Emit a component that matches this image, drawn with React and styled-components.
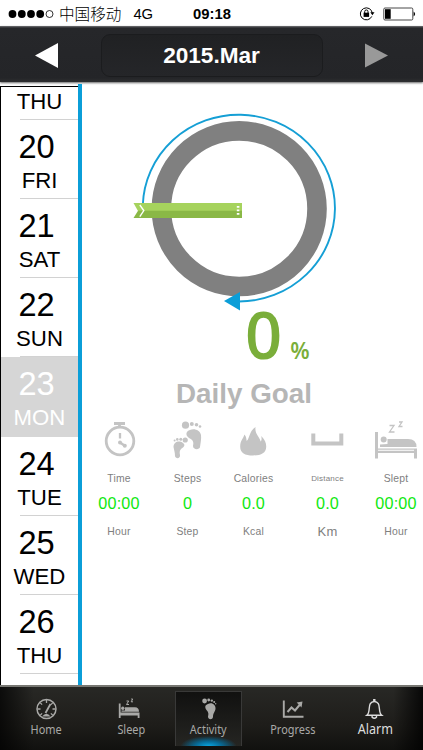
// import packages
import React from "react";
import { useState } from "react";
import styled, { createGlobalStyle } from "styled-components";

const GlobalStyle = createGlobalStyle`
  * {
    box-sizing: border-box;
  }
  body {
    margin: 0;
    background: white;
    font-family: "Liberation Sans", "Noto Sans CJK SC", sans-serif;
  }
`;

const Screen = styled.div`
  width: 423px;
  height: 750px;
  display: flex;
  flex-direction: column;
  overflow: hidden;
  background: white;
`;

const StatusBar = styled.div`
  flex: none;
  height: 26px;
  padding: 1px 7px 0 8px;
  display: grid;
  grid-template-columns: 1fr auto 1fr;
  align-items: center;
  font-size: 14.8px;
  color: black;
`;
const Carrier = styled.div`
  display: flex;
  align-items: center;
  white-space: nowrap;
`;
const CarrierName = styled.span`
  margin: -1px 12px 0 5px;
  font-family: "Noto Sans CJK SC", sans-serif;
  font-size: 15.6px;
  font-weight: 300;
  line-height: 24px;
`;
const Clock = styled.div`
  font-weight: 700;
  font-size: 14.8px;
`;
const StatusIcons = styled.div`
  display: flex;
  justify-content: flex-end;
  align-items: center;
  gap: 8px;
`;

const Header = styled.div`
  flex: none;
  height: 56px;
  padding: 6px 34px 4px;
  display: flex;
  justify-content: space-between;
  align-items: center;
  background: linear-gradient(#727376 0, #26272a 2px, #242528 52px, #2e2f31 56px);
  box-shadow: 0 1px 2px rgba(0, 0, 0, 0.6);
`;
const ArrowButton = styled.button`
  width: 24px;
  height: 28px;
  padding: 0;
  border: none;
  background: none;
  color: ${(props) => (props.$dim ? "#999999" : "#ffffff")};
  svg {
    display: block;
  }
`;
const MonthTitle = styled.div`
  width: 222px;
  height: 43px;
  border-radius: 9px;
  border: 1px solid #1b1c1e;
  background: linear-gradient(#202123, #252629);
  color: white;
  font-size: 22.6px;
  font-weight: 700;
  line-height: 42px;
  text-align: center;
`;

const Main = styled.div`
  height: 603px;
  padding-top: 2px;
  display: flex;
`;

const DayColumn = styled.div`
  flex: none;
  width: 82px;
  height: 601px;
  padding-top: 2px;
  border-right: 4px solid #0b9ed8;
`;
const DayList = styled.div`
  height: 599px;
  overflow: hidden;
  border-left: 1.6px solid black;
  border-top: 1px solid black;
`;
const DayCell = styled.div`
  height: ${(props) => (props.$tail ? "32.8px" : "79.2px")};
  padding-top: ${(props) => (props.$tail ? "1px" : "11px")};
  text-align: center;
  color: ${(props) => (props.$selected ? "white" : "black")};
  background: ${(props) =>
    props.$selected
      ? "#d6d6d6"
      : "linear-gradient(#d2d2d2, #d2d2d2) right bottom / 58px 1px no-repeat"};
`;
const DayNumber = styled.div`
  height: 36px;
  padding-right: 6px;
  font-size: 32.6px;
  line-height: 32px;
`;
const DayName = styled.div`
  font-size: 22.2px;
  line-height: 28px;
`;

const Content = styled.div`
  flex: 1;
  padding-top: 26px;
  display: flex;
  flex-direction: column;
`;
const Dial = styled.svg`
  flex: none;
  display: block;
  margin-left: 48px;
`;
const Percent = styled.div`
  display: flex;
  align-items: baseline;
  height: 52px;
  padding-left: 163px;
  color: #7aae3a;
  font-family: "Open Sans", "Liberation Sans", sans-serif;
  font-weight: 600;
  font-size: 65px;
  line-height: 47px;
`;
const PercentSign = styled.span`
  margin-left: 8px;
  font-size: 22.5px;
`;
const Goal = styled.div`
  margin: 13px 0 0 94px;
  font-size: 27.8px;
  font-weight: 700;
  line-height: 36px;
  color: #b6b6b6;
`;

const Stats = styled.div`
  margin-top: 9px;
  padding-left: 2px;
  display: grid;
  grid-template-columns: 70px 67px 65px 83px 54px;
`;
const Stat = styled.div`
  display: flex;
  flex-direction: column;
  align-items: center;
  white-space: nowrap;
  color: #808080;
`;
const StatIcon = styled.svg`
  display: block;
  color: #c4c4c4;
`;
const StatLabel = styled.div`
  margin-top: 8px;
  height: 20px;
  line-height: 20px;
  font-size: ${(props) => (props.$small ? "8px" : "10.4px")};
  letter-spacing: 0.2px;
`;
const StatValue = styled.div`
  margin-top: 3px;
  height: 22px;
  line-height: 22px;
  font-size: 16.2px;
  letter-spacing: 0.2px;
  color: #10e810;
`;
const StatUnit = styled.div`
  margin-top: 8px;
  height: 20px;
  line-height: 20px;
  font-size: ${(props) => (props.$large ? "13px" : "10.4px")};
  letter-spacing: 0.2px;
`;

const TabBar = styled.div`
  flex: none;
  height: 65px;
  padding: 4px 3px 4px 5px;
  display: grid;
  grid-template-columns: 83px 87px 67px 102px 62px;
  border-top: 2px solid #777772;
  background:
    linear-gradient(90deg, rgba(0, 0, 0, 0.7), transparent 8%, transparent 93%, rgba(0, 0, 0, 0.8)),
    linear-gradient(#282825, #1e1d1a 60%, #11110f);
`;
const Tab = styled.button`
  padding: 5px 0 0;
  border: 1px solid ${(props) => (props.$active ? "#393938" : "transparent")};
  border-bottom: none;
  display: flex;
  flex-direction: column;
  align-items: center;
  background: ${(props) =>
    props.$active
      ? "radial-gradient(ellipse 28px 10px at 50% 100%, #08a4df, #076b98 45%, transparent), linear-gradient(#111110, #252522)"
      : "none"};
  color: ${(props) => (props.$bright ? "#dddddd" : "#a9a9a7")};
  font-family: "Noto Sans", sans-serif;
  font-size: ${(props) => (props.$bright ? "13.8px" : "12px")};
  line-height: 18px;
`;
const TabIcon = styled.svg`
  display: block;
  flex: none;
  overflow: visible;
`;
const TabLabel = styled.span`
  margin: ${(props) => (props.$bright ? "-1px 0 0" : "0")};
  transform: scaleX(0.91);
`;

const days = [
  { number: 20, name: "FRI" },
  { number: 21, name: "SAT" },
  { number: 22, name: "SUN" },
  { number: 23, name: "MON" },
  { number: 24, name: "TUE" },
  { number: 25, name: "WED" },
  { number: 26, name: "THU" },
];

const bigFoot =
  "M19 9C23 7 29 9 30 14C30.5 18 29.5 22 29 26C28.5 29 22 29 22 25C23 21 22 19 18 17C14 14 15 10 19 9Z";

const statIcons = {
  time: (
    <g fill="none" stroke="currentColor">
      <path d="M11 2.5h11M16.5 3v4" strokeWidth="2.8" />
      <circle cx="17" cy="20" r="13.8" strokeWidth="2.8" />
      <path d="M17 12v5.5" strokeWidth="2.3" />
      <path d="M17 21.5l5.5 3.8" strokeWidth="2.5" />
      <circle cx="17" cy="21.5" r="2" fill="currentColor" stroke="none" />
      <circle cx="21.8" cy="24.8" r="2" fill="currentColor" stroke="none" />
    </g>
  ),
  steps: (
    <g fill="currentColor">
      <path d={bigFoot} />
      <circle cx="14.5" cy="4.2" r="3.6" />
      <circle cx="20.8" cy="3" r="2" />
      <circle cx="25.5" cy="3.8" r="1.8" />
      <circle cx="29" cy="5.5" r="1.3" />
      <path d="M12 22C8 19 2.5 21 2.5 26C3 29 4 31 4 35C4.5 38 9.5 38 9 34C8 29 10 28 12 26.5C14 25 13.8 23 12 22Z" />
      <circle cx="14.2" cy="19" r="2.6" />
      <circle cx="9.8" cy="18.2" r="1.5" />
      <circle cx="6.3" cy="18.4" r="1.3" />
      <circle cx="3.6" cy="19.5" r="1" />
    </g>
  ),
  calories: (
    <path
      fill="currentColor"
      d="M16 34.5C8 34.5 3.2 32 3.2 26C3 20 6 18 7.5 13.5C9.5 16 9.3 18 9.7 20C13 17 12 10 18.5 6C17.5 13 23 16 23.6 20.5C25 19 24.6 17 24.3 15C28 19 29.3 22 29.2 26C29 32 24 34.5 16 34.5Z"
    />
  ),
  distance: (
    <path d="M2.3 12.4v10h28v-10" fill="none" stroke="currentColor" strokeWidth="4" />
  ),
  slept: (
    <g fill="currentColor">
      <path d="M0 11h3v16.5h39V37.5h-3v-5.5H3v5.5H0ZM3 28.8v1h36v-1Z" fillRule="evenodd" />
      <circle cx="8.7" cy="18.5" r="3" />
      <path d="M5 26V23.5L12.5 23V18H33Q41.5 18 41.5 26Z" />
      <path
        d="M14.5 4.5h4.5l-4.5 6.5h5M24 1h3l-3 4.5h3.5"
        fill="none"
        stroke="currentColor"
        strokeWidth="1.3"
      />
    </g>
  ),
};

const stats = [
  { icon: "time", label: "Time", value: "00:00", unit: "Hour", width: 33 },
  { icon: "steps", label: "Steps", value: "0", unit: "Step", width: 33 },
  { icon: "calories", label: "Calories", value: "0.0", unit: "Kcal", width: 33 },
  { icon: "distance", label: "Distance", value: "0.0", unit: "Km", width: 33 },
  { icon: "slept", label: "Slept", value: "00:00", unit: "Hour", width: 42 },
];

const tabIcons = {
  Home: (
    <g fill="none" stroke="currentColor">
      <circle cx="11.5" cy="12" r="9.5" strokeWidth="1.5" />
      <path
        d="M11.5 3v3M2.5 12h3M17.5 12h3M5.1 5.6l2 2M17.9 5.6l-2 2M5.1 18.4l2-2M17.9 18.4l-2-2"
        strokeWidth="1.3"
      />
      <path d="M15.5 7l-5 9" strokeWidth="1.8" />
      <path d="M7 19.5Q11.5 14 15.5 19.5Z" fill="currentColor" stroke="none" />
    </g>
  ),
  Sleep: (
    <g fill="currentColor" transform="translate(-4 0)">
      <path d="M2.8 6.5h1.8v9H23.5V21h-1.8v-2.5H4.6V21H2.8Z" />
      <circle cx="6.8" cy="11.3" r="1.7" />
      <path d="M5.5 14.8v-1.2H9V10.2h10Q23 10.2 23 14.8Z" />
      <path d="M10.5 4h2.2L10.5 7.5H13M15.2 2h1.5l-1.5 2.8H17" fill="none" stroke="currentColor" />
    </g>
  ),
  Activity: (
    <g fill="currentColor">
      <path d="M11 7C15 5 19 8 18.5 12C18 15 16 16 16 20C15.5 23 11 23 11 19.5C12 16 11 15 9.5 13C7.5 10 8 8 11 7Z" />
      <circle cx="7.6" cy="4" r="2.4" />
      <circle cx="11.7" cy="3" r="1.4" />
      <circle cx="14.8" cy="3.6" r="1.2" />
      <circle cx="17.2" cy="5" r="1" />
      <circle cx="18.7" cy="6.8" r="0.7" />
    </g>
  ),
  Progress: (
    <g fill="none" stroke="currentColor">
      <path d="M2.8 3.5v16.3H22.5" strokeWidth="1.9" />
      <path d="M6.5 15l4-4.5 3.5 3L19 7.5" strokeWidth="2" />
      <path d="M15.7 5.5l5.8-1-1 6Z" fill="currentColor" stroke="none" />
    </g>
  ),
  Alarm: (
    <g fill="none" stroke="currentColor" strokeWidth="1.4" transform="translate(-0.7 0)">
      <path d="M4.5 18.3C8 15.5 6 10 8 6.7Q9.3 4.5 12 4.5Q14.7 4.5 16 6.7C18 10 16 15.5 19.5 18.3Z" />
      <path d="M9.8 19v1.2Q12 22.3 14.2 20.2V19" />
      <path d="M12 4.5V2" strokeWidth="2.4" />
    </g>
  ),
};

function StatusRow() {
  return (
    <StatusBar>
      <Carrier>
        <svg width="46" height="10" viewBox="0 0 46 10">
          {[4.5, 13.8, 23, 32.2].map((x) => (
            <circle key={x} cx={x} cy="5" r="3.9" />
          ))}
          <circle cx="41.5" cy="5" r="3.5" fill="none" stroke="black" strokeWidth="0.8" />
        </svg>
        <CarrierName>中国移动</CarrierName>
        <span>4G</span>
      </Carrier>
      <Clock>09:18</Clock>
      <StatusIcons>
        <svg width="16" height="15" viewBox="0 0 16 15" fill="none" stroke="black">
          <path d="M12.8 10.4A6 6 0 1 1 13.3 7" strokeWidth="1" />
          <path d="M11.3 6.3h4.2l-2.1 2.9Z" fill="black" stroke="none" />
          <rect x="4.6" y="6.7" width="5.5" height="4.2" fill="black" stroke="none" />
          <path d="M5.7 7V5.6a1.65 1.65 0 0 1 3.3 0V7" strokeWidth="1" />
        </svg>
        <svg width="33" height="14" viewBox="0 0 33 14">
          <rect x="0.8" y="1" width="29" height="12" rx="1.2" fill="none" stroke="#333" strokeWidth="0.9" />
          <rect x="2" y="2.2" width="5.7" height="9.6" />
          <path d="M30.6 4.6q3 2.4 0 4.8Z" />
        </svg>
      </StatusIcons>
    </StatusBar>
  );
}

function GoalDial() {
  return (
    <Dial width="210" height="201" viewBox="130 110 210 201">
      <circle cx="239.2" cy="208.7" r="77.8" fill="none" stroke="#808080" strokeWidth="19.6" />
      <path
        d="M142.8 205A96.1 93.4 0 1 1 239 301.5"
        fill="none"
        stroke="#159fd5"
        strokeWidth="1.9"
      />
      <path d="M224 301L240 292V310.5Z" fill="#0b9ed8" />
      <path d="M133.5 203H242V211H138Z" fill="#a6d35d" />
      <path d="M138 210.7H242V218H133.5Z" fill="#8ab846" />
      <path d="M139.8 205l4 5.6-4 6" fill="none" stroke="white" strokeWidth="1.4" />
      <path d="M236.8 206h2.6v1.8h-2.6zM236.8 209.5h2.6v1.8h-2.6zM236.8 213h2.6v1.8h-2.6z" fill="white" />
    </Dial>
  );
}

function App() {
  const [selected, setSelected] = useState(23);
  const [tab, setTab] = useState("Activity");

  return (
    <Screen>
      <GlobalStyle />
      <StatusRow />
      <Header>
        <ArrowButton aria-label="Previous month">
          <svg width="24" height="28" viewBox="0 0 24 28">
            <path d="M1 14.5L24 2V27Z" fill="currentColor" />
          </svg>
        </ArrowButton>
        <MonthTitle>2015.Mar</MonthTitle>
        <ArrowButton $dim aria-label="Next month">
          <svg width="24" height="28" viewBox="0 0 24 28">
            <path d="M23 14.5L0 2.5V26.5Z" fill="currentColor" />
          </svg>
        </ArrowButton>
      </Header>
      <Main>
        <DayColumn>
          <DayList>
            <DayCell $tail>
              <DayName>THU</DayName>
            </DayCell>
            {days.map((day) => (
              <DayCell
                key={day.number}
                $selected={day.number === selected}
                onClick={() => setSelected(day.number)}
              >
                <DayNumber>{day.number}</DayNumber>
                <DayName>{day.name}</DayName>
              </DayCell>
            ))}
          </DayList>
        </DayColumn>
        <Content>
          <GoalDial />
          <Percent>
            0<PercentSign>%</PercentSign>
          </Percent>
          <Goal>Daily Goal</Goal>
          <Stats>
            {stats.map((stat) => (
              <Stat key={stat.label}>
                <StatIcon width={stat.width} height="40" viewBox={`0 0 ${stat.width} 40`}>
                  {statIcons[stat.icon]}
                </StatIcon>
                <StatLabel $small={stat.label === "Distance"}>{stat.label}</StatLabel>
                <StatValue>{stat.value}</StatValue>
                <StatUnit $large={stat.unit === "Km"}>{stat.unit}</StatUnit>
              </Stat>
            ))}
          </Stats>
        </Content>
      </Main>
      <TabBar>
        {Object.keys(tabIcons).map((name) => (
          <Tab
            key={name}
            $active={name === tab}
            $bright={name === "Alarm"}
            onClick={() => setTab(name)}
          >
            <TabIcon width="24" height="24" viewBox="0 0 24 24">
              {tabIcons[name]}
            </TabIcon>
            <TabLabel $bright={name === "Alarm"}>{name}</TabLabel>
          </Tab>
        ))}
      </TabBar>
    </Screen>
  );
}

export default App;
